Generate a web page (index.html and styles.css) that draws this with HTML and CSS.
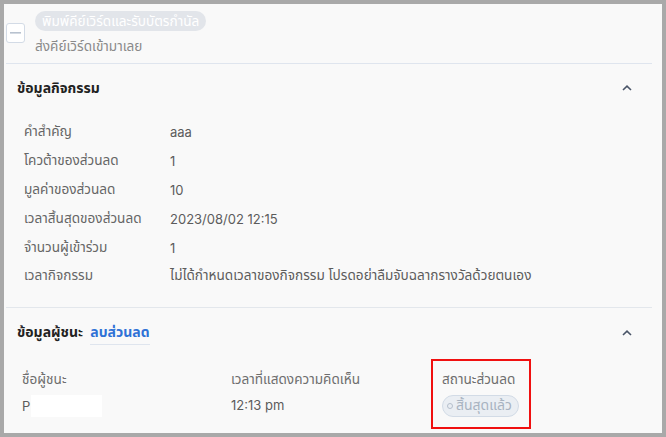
FILE: index.html
```html
<!DOCTYPE html>
<html lang="th">

<head>
    <meta charset="UTF-8" />
    <meta name="viewport" content="width=device-width, initial-scale=1.0" />
    <title>ข้อมูลกิจกรรม</title>
    <link rel="stylesheet" href="styles.css">
</head>

<body>
    <div class="frame">
        <div class="panel">
            <!-- ขั้นตอนส่งคีย์เวิร์ด -->
            <div class="step">
                <div class="step-check">
                    <svg width="11" height="2" viewBox="0 0 11 2"><rect width="11" height="1.6" fill="#b8c2cf" /></svg>
                </div>
                <div class="step-body">
                    <span class="step-pill">พิมพ์คีย์เวิร์ดและรับบัตรกำนัล</span>
                    <span class="step-desc">ส่งคีย์เวิร์ดเข้ามาเลย</span>
                </div>
            </div>

            <!-- ข้อมูลกิจกรรม -->
            <div class="section">
                <div class="section-head">
                    <span class="section-title">ข้อมูลกิจกรรม</span>
                    <svg class="chevron" width="10" height="6" viewBox="0 0 10 6"><path d="M1 5 L5 1.2 L9 5" fill="none" stroke="#4a5568" stroke-width="1.6" /></svg>
                </div>
                <div class="info-list">
                    <div class="info-row"><span class="info-label">คำสำคัญ</span><span class="info-value">aaa</span></div>
                    <div class="info-row"><span class="info-label">โควต้าของส่วนลด</span><span class="info-value">1</span></div>
                    <div class="info-row"><span class="info-label">มูลค่าของส่วนลด</span><span class="info-value">10</span></div>
                    <div class="info-row"><span class="info-label">เวลาสิ้นสุดของส่วนลด</span><span class="info-value">2023/08/02 12:15</span></div>
                    <div class="info-row"><span class="info-label">จำนวนผู้เข้าร่วม</span><span class="info-value">1</span></div>
                    <div class="info-row"><span class="info-label">เวลากิจกรรม</span><span class="info-value thai">ไม่ได้กำหนดเวลาของกิจกรรม โปรดอย่าลืมจับฉลากรางวัลด้วยตนเอง</span></div>
                </div>
            </div>

            <!-- ข้อมูลผู้ชนะ -->
            <div class="section section-last">
                <div class="section-head winner-head">
                    <span class="section-title">ข้อมูลผู้ชนะ <a class="head-link" href="#">ลบส่วนลด</a></span>
                    <svg class="chevron" width="10" height="6" viewBox="0 0 10 6"><path d="M1 5 L5 1.2 L9 5" fill="none" stroke="#4a5568" stroke-width="1.6" /></svg>
                </div>
                <div class="winner-grid">
                    <div class="winner-col">
                        <span class="winner-label">ชื่อผู้ชนะ</span>
                        <span class="winner-value">P<span class="masked"></span></span>
                    </div>
                    <div class="winner-col">
                        <span class="winner-label">เวลาที่แสดงความคิดเห็น</span>
                        <span class="winner-value">12:13 pm</span>
                    </div>
                    <div class="winner-col status-col">
                        <span class="winner-label">สถานะส่วนลด</span>
                        <span class="status-pill"><i class="status-dot"></i>สิ้นสุดแล้ว</span>
                        <div class="highlight"></div>
                    </div>
                </div>
            </div>
        </div>
    </div>
</body>

</html>
```

FILE: styles.css
```css
html,
body {
    margin: 0;
    padding: 0;
    height: 100%;
    overflow: hidden;
    background: #a9a9a9;
    font-family: 'Inter', 'Noto Sans Thai', 'Noto Sans', sans-serif;
}

.frame {
    padding: 4px;
    height: 100%;
    box-sizing: border-box;
}

.panel {
    height: 100%;
    background: #f9f9f9;
    padding: 0 10px 0 2px;
    box-sizing: border-box;
    overflow: hidden;
}

/* ขั้นตอน */
.step {
    display: flex;
    align-items: flex-start;
    gap: 10px;
    padding-top: 7px;
    height: 60px;
    box-sizing: border-box;
    border-bottom: 1px solid #dfe5ee;
}

.step-check {
    margin-top: 12px;
    width: 17px;
    height: 18px;
    border: 1px solid #d3dbe6;
    border-radius: 3px;
    background: #fff;
    display: flex;
    align-items: center;
    justify-content: center;
}

.step-body {
    display: flex;
    flex-direction: column;
    align-items: flex-start;
}

.step-pill {
    background: #e2e5ea;
    color: #fff;
    font-size: 13.6px;
    line-height: 20px;
    padding: 0 7px;
    border-radius: 10px;
}

.step-desc {
    color: #8a8a8a;
    font-size: 13.6px;
    line-height: 20px;
    margin-top: 5px;
}

/* ส่วนข้อมูล */
.section {
    border-bottom: 1px solid #e3e7ec;
    padding-bottom: 16px;
}

.section-last {
    border-bottom: none;
}

.section-head {
    display: flex;
    align-items: center;
    justify-content: space-between;
    height: 48px;
    padding: 0 20px 0 11px;
}

.winner-head {
    height: 50px;
    padding-top: 0;
}

.section-title {
    font-size: 14px;
    font-weight: 700;
    color: #222;
}

.chevron {
    display: block;
}

.head-link {
    margin-left: 4px;
    color: #2f72d6;
    text-decoration: none;
    font-weight: 700;
    padding-bottom: 4px;
    border-bottom: 1px solid #dfe5ee;
}

.info-list {
    padding: 6px 0 0 18px;
}

.info-row {
    display: flex;
    height: 28.8px;
    align-items: center;
    font-size: 13.6px;
    color: #666;
}

.info-label {
    width: 146px;
}

.info-value {
    color: #5c5c5c;
    font-size: 13px;
}

.info-value.thai {
    font-size: 13.6px;
}

/* ผู้ชนะ */
.winner-grid {
    display: grid;
    grid-template-columns: 209px 211px 1fr;
    padding: 11px 0 0 16px;
}

.winner-col {
    display: flex;
    flex-direction: column;
    align-items: flex-start;
    gap: 6px;
    font-size: 13.6px;
}

.winner-label {
    color: #6e6e6e;
    line-height: 20px;
}

.winner-value {
    color: #5c5c5c;
    font-size: 13px;
    line-height: 20px;
    display: flex;
    align-items: center;
}

.masked {
    display: inline-block;
    width: 71px;
    height: 22px;
    background: #fff;
    margin-left: 1px;
}

.status-col {
    position: relative;
}

.status-pill {
    display: inline-flex;
    align-items: center;
    gap: 3px;
    height: 20px;
    padding: 0 6px 0 4px;
    border: 1px solid #d2dbe6;
    border-radius: 11px;
    background: #eaeef3;
    color: #a8b3c1;
    font-size: 14px;
}

.status-dot {
    width: 4px;
    height: 4px;
    border: 1px solid #b5bfcc;
    border-radius: 50%;
}

.highlight {
    position: absolute;
    left: -11px;
    top: -10px;
    width: 96px;
    height: 66px;
    border: 2px solid #f01010;
}
```
